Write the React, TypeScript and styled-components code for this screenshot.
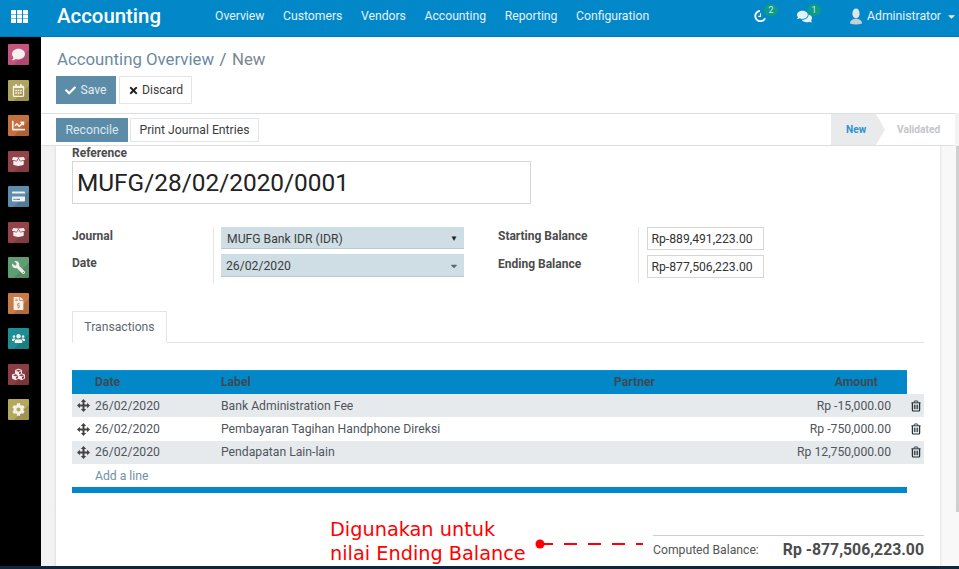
import React from "react";
import styled, { createGlobalStyle } from "styled-components";
import {
  FaBoxOpen,
  FaCaretDown,
  FaCheck,
  FaCog,
  FaComment,
  FaComments,
  FaCreditCard,
  FaRegCalendarAlt,
  FaChartLine,
  FaTimes,
  FaUsers,
  FaWrench,
  FaFileInvoiceDollar,
  FaCubes,
} from "react-icons/fa";

const GlobalStyle = createGlobalStyle`
  html, body {
    margin: 0;
    padding: 0;
    background: #000;
  }
  * {
    box-sizing: border-box;
  }
`;

const FlippedWrench = styled(FaWrench)`
  transform: scaleX(-1);
`;

const apps = [
  { color: "#c4557e", icon: <FaComment /> },
  { color: "#b0a55f", icon: <FaRegCalendarAlt /> },
  { color: "#c4703f", icon: <FaChartLine /> },
  { color: "#93444a", icon: <FaBoxOpen /> },
  { color: "#5d8cad", icon: <FaCreditCard /> },
  { color: "#93444a", icon: <FaBoxOpen /> },
  { color: "#5f9e73", icon: <FlippedWrench /> },
  { color: "#c97a45", icon: <FaFileInvoiceDollar /> },
  { color: "#1f8e94", icon: <FaUsers /> },
  { color: "#8a3d42", icon: <FaCubes /> },
  { color: "#b3a85c", icon: <FaCog /> },
];

const menus = ["Overview", "Customers", "Vendors", "Accounting", "Reporting", "Configuration"];

const lines = [
  { label: "Bank Administration Fee", amount: "Rp -15,000.00" },
  { label: "Pembayaran Tagihan Handphone Direksi", amount: "Rp -750,000.00" },
  { label: "Pendapatan Lain-lain", amount: "Rp 12,750,000.00" },
];

const GridIcon = () => (
  <svg width="17" height="13" viewBox="0 0 17 13" fill="#fff">
    {[0, 6, 12].map((x) =>
      [0, 4.5, 9].map((y) => <rect key={`${x}-${y}`} x={x} y={y} width="5" height="4" rx="0.5" />)
    )}
  </svg>
);

const MoveIcon = () => (
  <svg width="13" height="13" viewBox="0 0 13 13" fill="#444">
    <path d="M6.5 0 9.2 2.9H7.5v2.6h2.6V3.8L13 6.5 10.1 9.2V7.5H7.5v2.6h1.7L6.5 13 3.8 10.1h1.7V7.5H2.9v1.7L0 6.5 2.9 3.8v1.7h2.6V2.9H3.8z" />
  </svg>
);

const TrashIcon = () => (
  <svg width="10" height="12" viewBox="0 0 11 12" fill="none" stroke="#1d2a30" strokeWidth="1">
    <path d="M.5 2.5h10M3.5 2.5V1.2q0-.7.7-.7h2.6q.7 0 .7.7v1.3" />
    <path d="M1.5 2.5v8q0 1 1 1h6q1 0 1-1v-8" strokeWidth="1.3" />
    <path d="M3.7 4.5v5M5.5 4.5v5M7.3 4.5v5" />
  </svg>
);

const ClockIcon = () => (
  <svg width="13" height="14" viewBox="0 0 14 14" fill="none" stroke="#fff">
    <path d="M12 9.5A5.6 5.6 0 1 1 6.5 1.4" strokeWidth="2" />
    <path d="M7 4v3.4H4.6" strokeWidth="1.2" />
  </svg>
);

const UserIcon = () => (
  <svg width="12" height="17" viewBox="0 0 12 17">
    <ellipse cx="6" cy="5.5" rx="3.6" ry="5" fill="#dfe6e8" />
    <path d="M0 15.5q0-3.6 3.8-4.6h4.4q3.8 1 3.8 4.6q-6 2-12 0z" fill="#c6d0d4" />
  </svg>
);

export default function App() {
  return (
    <Page>
      <GlobalStyle />
      <Navbar>
        <AppsButton>
          <GridIcon />
        </AppsButton>
        <Brand>Accounting</Brand>
        <MenuList>
          {menus.map((m) => (
            <MenuItem key={m}>{m}</MenuItem>
          ))}
        </MenuList>
        <Systray>
          <TrayIcon>
            <ClockIcon />
            <Badge>2</Badge>
          </TrayIcon>
          <TrayIcon>
            <FaComments />
            <Badge>1</Badge>
          </TrayIcon>
          <UserMenu>
            <UserIcon />
            Administrator
            <FaCaretDown />
          </UserMenu>
        </Systray>
      </Navbar>
      <Body>
        <Sidebar>
          {apps.map((a, i) => (
            <AppTile key={i} $color={a.color}>
              {a.icon}
            </AppTile>
          ))}
        </Sidebar>
        <Main>
          <ControlPanel>
            <Breadcrumb>
              <Crumb>Accounting Overview</Crumb>
              <CrumbSep>/</CrumbSep>
              <CrumbActive>New</CrumbActive>
            </Breadcrumb>
            <ButtonRow>
              <PrimaryButton>
                <FaCheck />
                Save
              </PrimaryButton>
              <DefaultButton>
                <FaTimes />
                Discard
              </DefaultButton>
            </ButtonRow>
          </ControlPanel>
          <StatusBar>
            <StatusActions>
              <SmallPrimary>Reconcile</SmallPrimary>
              <SmallDefault>Print Journal Entries</SmallDefault>
            </StatusActions>
            <Steps>
              <StepActive>New</StepActive>
              <StepIdle>Validated</StepIdle>
            </Steps>
          </StatusBar>
          <Scroller>
            <Sheet>
              <FieldLabel>Reference</FieldLabel>
              <TitleBox>MUFG/28/02/2020/0001</TitleBox>
              <Groups>
                <LeftGroup>
                  <LabelColumn>
                    <GroupLabel>Journal</GroupLabel>
                    <GroupLabel>Date</GroupLabel>
                  </LabelColumn>
                  <ValueColumn>
                    <SelectBox>
                      MUFG Bank IDR (IDR)
                      <NativeArrow>▼</NativeArrow>
                    </SelectBox>
                    <DateBox>
                      26/02/2020
                      <FaCaretDown />
                    </DateBox>
                  </ValueColumn>
                </LeftGroup>
                <RightGroup>
                  <BalanceLabels>
                    <GroupLabel>Starting Balance</GroupLabel>
                    <GroupLabel>Ending Balance</GroupLabel>
                  </BalanceLabels>
                  <BalanceValues>
                    <BalanceBox>Rp-889,491,223.00</BalanceBox>
                    <BalanceBox>Rp-877,506,223.00</BalanceBox>
                  </BalanceValues>
                </RightGroup>
              </Groups>
              <Tabs>
                <Tab>Transactions</Tab>
              </Tabs>
              <TableHead>
                <HeadDate>Date</HeadDate>
                <HeadLabel>Label</HeadLabel>
                <HeadPartner>Partner</HeadPartner>
                <HeadAmount>Amount</HeadAmount>
              </TableHead>
              {lines.map((l, i) => (
                <Row key={l.label} $striped={i % 2 === 0}>
                  <Handle>
                    <MoveIcon />
                  </Handle>
                  <CellDate>26/02/2020</CellDate>
                  <CellLabel>{l.label}</CellLabel>
                  <CellAmount>{l.amount}</CellAmount>
                  <CellTrash>
                    <TrashIcon />
                  </CellTrash>
                </Row>
              ))}
              <AddRow>Add a line</AddRow>
              <TableFoot />
              <TotalBlock>
                <TotalLabel>Computed Balance:</TotalLabel>
                <TotalValue>Rp -877,506,223.00</TotalValue>
              </TotalBlock>
            </Sheet>
            <ScrollTrack>
              <ScrollThumb />
            </ScrollTrack>
          </Scroller>
        </Main>
      </Body>
      <Annotation>
        Digunakan untuk
        <br />
        nilai Ending Balance
      </Annotation>
      <Pointer width="110" height="10" viewBox="0 0 110 10">
        <circle cx="5" cy="5" r="4.5" fill="#f00" />
        <path d="M5 5H108" stroke="#f00" strokeWidth="2" strokeDasharray="13 11" fill="none" />
      </Pointer>
      <BottomEdge />
    </Page>
  );
}

const Page = styled.div`
  position: relative;
  display: flex;
  flex-direction: column;
  width: 959px;
  height: 569px;
  overflow: hidden;
  font-family: Roboto, "Liberation Sans", sans-serif;
  font-size: 12.2px;
  color: #4c4c4c;
  background: #fff;
`;

const Navbar = styled.div`
  display: flex;
  align-items: center;
  flex: none;
  height: 37px;
  padding-bottom: 4px;
  background: #0288c9;
  border-bottom: 1px solid #0279b3;
  color: #fff;
`;

const AppsButton = styled.div`
  display: flex;
  justify-content: center;
  width: 39px;
  padding-top: 1px;
`;

const Brand = styled.div`
  width: 158px;
  margin-left: 18px;
  font-size: 20.4px;
  font-weight: 500;
`;

const MenuList = styled.div`
  display: flex;
  gap: 18.6px;
  color: #e4f2f9;
`;

const MenuItem = styled.div`
  font-size: 12.2px;
`;

const Systray = styled.div`
  display: flex;
  align-items: center;
  margin-left: auto;
  padding-right: 2px;
  color: #e4f2f9;
`;

const TrayIcon = styled.div`
  position: relative;
  display: flex;
  align-items: center;
  width: 43px;
  font-size: 15px;
`;

const Badge = styled.span`
  position: absolute;
  top: -5px;
  left: 10px;
  width: 14px;
  height: 12px;
  border-radius: 6px;
  background: #0f9a8a;
  font-size: 9px;
  line-height: 12px;
  text-align: center;
  color: #cfe9e6;
`;

const UserMenu = styled.div`
  display: flex;
  align-items: center;
  gap: 5px;
  margin-left: 10px;
  font-size: 12.2px;
  svg:last-child {
    font-size: 11px;
  }
`;

const Body = styled.div`
  display: flex;
  flex: 1;
  min-height: 0;
`;

const Sidebar = styled.div`
  display: flex;
  flex-direction: column;
  align-items: center;
  gap: 14.55px;
  flex: none;
  width: 41px;
  padding: 7px 4px 0 0;
  background: #000;
`;

const AppTile = styled.div<{ $color: string }>`
  display: flex;
  align-items: center;
  justify-content: center;
  flex: none;
  width: 21px;
  height: 21px;
  border-radius: 1px;
  background: linear-gradient(135deg, transparent 62%, rgba(0, 0, 0, 0.12) 62%), ${(p) => p.$color};
  color: #f4f0ee;
  font-size: 13px;
`;

const Main = styled.div`
  display: flex;
  flex-direction: column;
  flex: 1;
  min-width: 0;
  background: #f3f3f3;
`;

const ControlPanel = styled.div`
  flex: none;
  height: 76px;
  padding: 12px 0 0 15px;
  background: #fff;
`;

const Breadcrumb = styled.div`
  display: flex;
  gap: 5.5px;
  height: 27px;
  padding-left: 1px;
  font-size: 16.8px;
  line-height: 20px;
`;

const Crumb = styled.span`
  color: #6b8aa0;
`;

const CrumbSep = styled.span`
  color: #6b7a85;
`;

const CrumbActive = styled.span`
  color: #7b8791;
`;

const ButtonRow = styled.div`
  display: flex;
  gap: 3px;
`;

const PrimaryButton = styled.div`
  display: flex;
  align-items: center;
  justify-content: center;
  gap: 4px;
  width: 60px;
  height: 28px;
  background: #5d8ca8;
  color: #e4edf2;
  svg {
    color: #fff;
    font-size: 11px;
  }
`;

const DefaultButton = styled.div`
  display: flex;
  align-items: center;
  justify-content: center;
  gap: 3px;
  width: 73px;
  height: 28px;
  border: 1px solid #e2e4e6;
  color: #3c3c3c;
  svg {
    color: #222;
    font-size: 11px;
  }
`;

const StatusBar = styled.div`
  display: flex;
  align-items: center;
  justify-content: space-between;
  flex: none;
  height: 33px;
  margin-right: 4px;
  padding-left: 15px;
  background: #fff;
  border-top: 1px solid #dcdfe2;
  border-bottom: 1px solid #dcdfe2;
`;

const StatusActions = styled.div`
  display: flex;
  gap: 2px;
`;

const SmallPrimary = styled.div`
  display: flex;
  align-items: center;
  justify-content: center;
  width: 72px;
  height: 24px;
  background: #5d8ca8;
  color: #dce7ee;
`;

const SmallDefault = styled.div`
  display: flex;
  align-items: center;
  justify-content: center;
  width: 129px;
  height: 24px;
  border: 1px solid #e2e4e6;
  color: #3c3c3c;
`;

const Steps = styled.div`
  display: flex;
  align-items: stretch;
  align-self: stretch;
  margin-right: 10px;
  font-size: 10.2px;
  font-weight: 700;
`;

const StepActive = styled.div`
  display: flex;
  align-items: center;
  width: 54px;
  padding-left: 15px;
  background: #e8eaec;
  clip-path: polygon(0 0, 83% 0, 100% 50%, 83% 100%, 0 100%);
  color: #2d93cf;
`;

const StepIdle = styled.div`
  display: flex;
  align-items: center;
  width: 60px;
  padding-left: 12px;
  color: #c3c6c9;
`;

const Scroller = styled.div`
  display: flex;
  flex: 1;
  min-height: 0;
  padding-left: 15px;
  background: linear-gradient(90deg, #f2f2f2, #f8f8f8);
  overflow: hidden;
`;

const Sheet = styled.div`
  flex: none;
  width: 884px;
  padding: 0 16px;
  background: #fff;
  box-shadow: 0 0 3px rgba(0, 0, 0, 0.14);
`;

const ScrollTrack = styled.div`
  flex: 1;
  display: flex;
  justify-content: flex-end;
`;

const ScrollThumb = styled.div`
  width: 3px;
  height: 366px;
  background: #cfcfcf;
`;

const FieldLabel = styled.div`
  height: 15px;
  font-size: 12px;
  font-weight: 700;
  line-height: 14px;
`;

const TitleBox = styled.div`
  width: 459px;
  height: 43px;
  padding-left: 4px;
  border: 1px solid #d6d6d6;
  color: #222;
  font-size: 24.4px;
  line-height: 42px;
`;

const Groups = styled.div`
  display: flex;
  margin-top: 23px;
`;

const LeftGroup = styled.div`
  display: flex;
  width: 426px;
`;

const LabelColumn = styled.div`
  display: flex;
  flex-direction: column;
  gap: 13px;
  width: 142px;
  padding-top: 2px;
  border-right: 1px solid #e6e6e6;
`;

const GroupLabel = styled.div`
  height: 14px;
  font-size: 12px;
  font-weight: 700;
  line-height: 14px;
`;

const ValueColumn = styled.div`
  display: flex;
  flex-direction: column;
  gap: 5px;
  height: 56px;
  padding-left: 7px;
`;

const SelectBox = styled.div`
  display: flex;
  align-items: center;
  justify-content: space-between;
  width: 243px;
  height: 22px;
  padding: 2px 6px 0 6px;
  background: #cfdee5;
  border-bottom: 1px solid #bcc9d0;
  color: #3c3c3c;
`;

const NativeArrow = styled.span`
  font-size: 8px;
  color: #222;
`;

const DateBox = styled.div`
  display: flex;
  align-items: center;
  justify-content: space-between;
  width: 243px;
  height: 23px;
  padding: 1px 5px 0;
  background: #cfdee5;
  border-bottom: 1px solid #bcc9d0;
  color: #3c3c3c;
  svg {
    font-size: 10px;
    color: #5c6870;
  }
`;

const RightGroup = styled.div`
  display: flex;
`;

const BalanceLabels = styled(LabelColumn)`
  gap: 14px;
  width: 141px;
`;

const BalanceValues = styled.div`
  display: flex;
  flex-direction: column;
  gap: 5px;
  padding-left: 8px;
`;

const BalanceBox = styled.div`
  width: 117px;
  height: 23px;
  padding-left: 3.5px;
  border: 1px solid #d6d6d6;
  color: #333;
  line-height: 22px;
`;

const Tabs = styled.div`
  display: flex;
  height: 32px;
  margin-top: 28px;
  border-bottom: 1px solid #e2e4e6;
`;

const Tab = styled.div`
  display: flex;
  align-items: center;
  justify-content: center;
  width: 95px;
  height: 32px;
  border: 1px solid #e2e4e6;
  border-bottom-color: #fff;
  color: #5f6870;
`;

const TableHead = styled.div`
  display: flex;
  align-items: center;
  width: 835px;
  height: 24px;
  margin-top: 27px;
  padding-bottom: 1px;
  background: #0288c9;
  border-top: 1px solid #0a95d4;
  color: #3d4a52;
  font-weight: 700;
`;

const HeadDate = styled.div`
  width: 149px;
  padding-left: 23px;
`;

const HeadLabel = styled.div`
  width: 393px;
`;

const HeadPartner = styled.div`
  width: 150px;
`;

const HeadAmount = styled.div`
  width: 114px;
  text-align: right;
`;

const Row = styled.div<{ $striped: boolean }>`
  display: flex;
  align-items: center;
  height: 23.4px;
  background: ${(p) => (p.$striped ? "#e7eaed" : "#fff")};
  color: #4f565c;
`;

const Handle = styled.div`
  display: flex;
  justify-content: center;
  width: 23px;
`;

const CellDate = styled.div`
  width: 126px;
`;

const CellLabel = styled.div`
  flex: 1;
`;

const CellAmount = styled.div`
  width: 200px;
  padding-right: 16px;
  text-align: right;
`;

const CellTrash = styled.div`
  display: flex;
  justify-content: center;
  width: 17px;
`;

const AddRow = styled.div`
  height: 22.8px;
  padding-left: 23px;
  color: #7191a8;
  line-height: 25px;
`;

const TableFoot = styled.div`
  width: 835px;
  height: 6px;
  background: #0288c9;
`;

const TotalBlock = styled.div`
  display: flex;
  align-items: center;
  justify-content: space-between;
  width: 271px;
  height: 28px;
  margin: 42px 0 0 auto;
  border-top: 1px solid #cfcfcf;
`;

const TotalLabel = styled.span`
  padding-top: 2px;
  color: #555;
`;

const TotalValue = styled.span`
  font-size: 15.8px;
  font-weight: 700;
  color: #4c4c4c;
`;

/* red callout drawn over the form */
const Annotation = styled.div`
  position: absolute;
  left: 330px;
  top: 518px;
  color: #f00;
  font-family: "DejaVu Sans", sans-serif;
  font-size: 19.3px;
  line-height: 24px;
`;

const Pointer = styled.svg`
  position: absolute;
  left: 535px;
  top: 539px;
`;

const BottomEdge = styled.div`
  position: absolute;
  left: 0;
  right: 0;
  bottom: 0;
  height: 3px;
  background: #10263a;
`;
